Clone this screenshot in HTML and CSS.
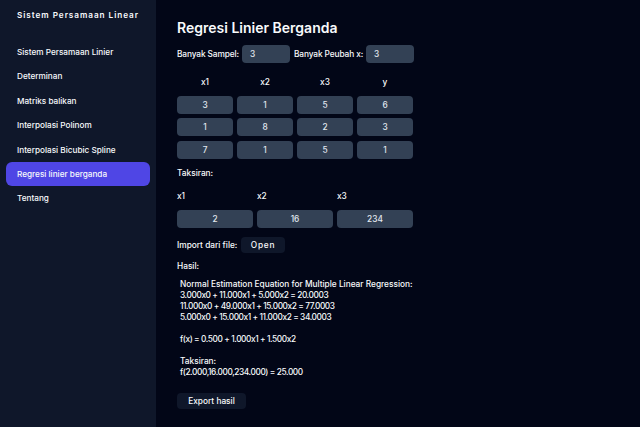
FILE: index.html
```html
<!DOCTYPE html>
<html lang="en">
<head>
    <meta charset="UTF-8">
    <title>Regresi Linier Berganda</title>
    <link rel="stylesheet" href="styles.css">
</head>
<body>
    <div class="sidebar">
        <div class="brand">Sistem Persamaan Linear</div>
        <div class="nav">
            <div class="nav-item">Sistem Persamaan Linier</div>
            <div class="nav-item">Determinan</div>
            <div class="nav-item">Matriks balikan</div>
            <div class="nav-item">Interpolasi Polinom</div>
            <div class="nav-item">Interpolasi Bicubic Spline</div>
            <div class="nav-item active">Regresi linier berganda</div>
            <div class="nav-item">Tentang</div>
        </div>
    </div>
    <div class="main">
        <h2>Regresi Linier Berganda</h2>
        <div class="size-row">
            <span class="sample-label">Banyak Sampel:</span>
            <div class="field size-field">3</div>
            <span class="var-label">Banyak Peubah x:</span>
            <div class="field size-field">3</div>
        </div>
        <div class="grid">
            <div class="head">x1</div>
            <div class="head">x2</div>
            <div class="head">x3</div>
            <div class="head">y</div>
            <div class="field cell">3</div>
            <div class="field cell">1</div>
            <div class="field cell">5</div>
            <div class="field cell">6</div>
            <div class="field cell">1</div>
            <div class="field cell">8</div>
            <div class="field cell">2</div>
            <div class="field cell">3</div>
            <div class="field cell">7</div>
            <div class="field cell">1</div>
            <div class="field cell">5</div>
            <div class="field cell">1</div>
        </div>
        <div class="section">Taksiran:</div>
        <div class="estimate">
            <div>x1</div>
            <div>x2</div>
            <div>x3</div>
            <div class="field cell">2</div>
            <div class="field cell">16</div>
            <div class="field cell">234</div>
        </div>
        <div class="import-row">
            <span class="import-label">Import dari file:</span>
            <button class="open-btn">Open</button>
        </div>
        <div class="result-title">Hasil:</div>
        <div class="result">Normal Estimation Equation for Multiple Linear Regression:
<span class="eq">3.000x0 + 11.000x1 + 5.000x2 = 20.0003
11.000x0 + 49.000x1 + 15.000x2 = 77.0003
5.000x0 + 15.000x1 + 11.000x2 = 34.0003

f(x) = 0.500 + 1.000x1 + 1.500x2</span>

Taksiran:
<span class="eq">f(2.000,16.000,234.000) = 25.000</span></div>
        <button class="export-btn">Export hasil</button>
    </div>
</body>
</html>
```

FILE: styles.css
```css
* {
    box-sizing: border-box;
}
html, body {
    margin: 0;
    height: 100%;
}
body {
    display: flex;
    width: 640px;
    height: 427px;
    overflow: hidden;
    background: #020617;
    color: #f8fafc;
    font-family: Inter, "Liberation Sans", sans-serif;
    font-size: 8.3px;
    font-weight: 500;
    font-feature-settings: "calt" 0;
}
.sidebar {
    width: 156px;
    flex-shrink: 0;
    background: #0f172a;
    padding: 9px 6px 0;
    font-size: 8.2px;
}
.brand {
    padding-left: 11px;
    font-weight: 600;
    letter-spacing: 0.95px;
    line-height: 12px;
}
.nav {
    margin-top: 19px;
    display: flex;
    flex-direction: column;
    gap: 0.4px;
}
.nav-item {
    height: 24px;
    line-height: 24px;
    padding-left: 11px;
    border-radius: 6px;
}
.nav-item.active {
    background: #4f46e5;
}
.main {
    flex: 1;
    padding: 19px 0 0 21px;
}
h2 {
    margin: 0;
    font-size: 14px;
    font-weight: 600;
    line-height: 18px;
}
.size-row {
    display: flex;
    align-items: center;
    margin-top: 8px;
    white-space: nowrap;
}
.sample-label {
    width: 65px;
    letter-spacing: -0.1px;
}
.var-label {
    width: 72px;
    margin-left: 4px;
    letter-spacing: -0.1px;
}
.field {
    background: #334155;
    border-radius: 4px;
    color: #e2e8f0;
}
.size-field {
    width: 48px;
    height: 18px;
    line-height: 18px;
    padding-left: 8px;
}
.grid {
    display: grid;
    grid-template-columns: repeat(4, 56px);
    column-gap: 4px;
    row-gap: 4.5px;
    width: 236px;
    margin-top: 11px;
}
.head {
    text-align: center;
    height: 17px;
    line-height: 16px;
}
.cell {
    height: 18px;
    line-height: 18px;
    text-align: center;
}
.section {
    margin-top: 8px;
    line-height: 12px;
}
.estimate {
    display: grid;
    grid-template-columns: repeat(3, 76px);
    column-gap: 4px;
    row-gap: 8px;
    width: 236px;
    margin-top: 11px;
    line-height: 12px;
}
.import-row {
    display: flex;
    align-items: center;
    margin-top: 9px;
}
.import-label {
    width: 64px;
}
button {
    background: #0f172a;
    color: #f8fafc;
    border: none;
    border-radius: 4px;
    font: inherit;
    font-feature-settings: inherit;
    height: 16px;
    padding: 0;
}
.open-btn {
    width: 44px;
    letter-spacing: 0.8px;
}
.result-title {
    margin-top: 7px;
    line-height: 12px;
}
.result {
    margin-top: 7px;
    padding-left: 3px;
    white-space: pre;
    line-height: 11px;
}
.eq {
    letter-spacing: -0.4px;
}
.export-btn {
    display: block;
    width: 69px;
    margin-top: 15px;
}
```
